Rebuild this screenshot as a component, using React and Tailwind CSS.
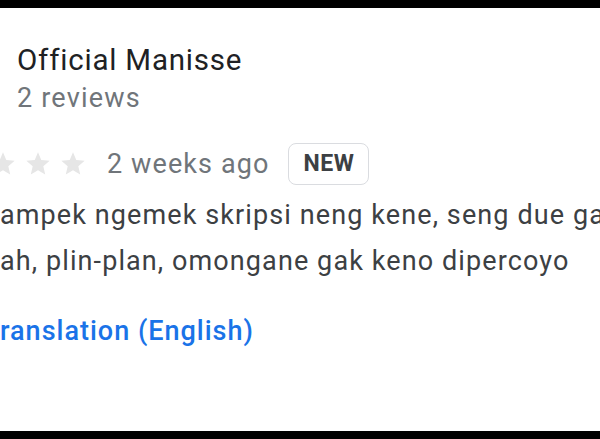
import React from "react";

const Star = ({ filled }) => (
  <svg width="28" height="28" viewBox="0 0 24 24" className="shrink-0">
    <path
      d="M12 17.27L18.18 21l-1.64-7.03L22 9.24l-7.19-.61L12 2 9.19 8.63 2 9.24l5.46 4.73L5.82 21z"
      fill={filled ? "#fbbc04" : "#e6e6e6"}
    />
  </svg>
);

export default function App() {
  return (
    <div className="w-[600px] h-[439px] overflow-hidden bg-black flex flex-col font-['Roboto',sans-serif]">
      <div className="h-[8px] shrink-0" />
      <div className="flex-1 bg-white overflow-hidden">
        {/* Reviewer */}
        <div className="pl-[17px] pt-[34px]">
          <div className="text-[29.5px] leading-[36px] tracking-[0.8px] text-[#202124]">Official Manisse</div>
          <div className="text-[27px] leading-[32px] tracking-[1.2px] text-[#70757a] mt-[4px]">2 reviews</div>
        </div>

        {/* Rating row */}
        <div className="flex items-center h-[42px] mt-[29px]">
          <div className="flex gap-[7px] -ml-[81px]">
            <Star filled />
            <Star />
            <Star />
            <Star />
            <Star />
          </div>
          <span className="text-[27px] tracking-[1.1px] text-[#70757a] ml-[20px]">2 weeks ago</span>
          <span className="ml-[19px] h-[42px] px-[14px] flex items-center border border-[#dadce0] rounded-[8px] text-[23px] tracking-[0.5px] font-bold text-[#3c4043]">
            NEW
          </span>
        </div>

        {/* Review text */}
        <div className="mt-[7px] text-[27px] leading-[46px] tracking-[1.1px] text-[#3c4043] whitespace-nowrap">
          <div>ampek ngemek skripsi neng kene, seng due ga</div>
          <div>ah, plin-plan, omongane gak keno dipercoyo</div>
        </div>

        <div className="mt-[24px] text-[27px] leading-[46px] tracking-[1px] font-medium text-[#1a73e8] whitespace-nowrap">
          ranslation (English)
        </div>
      </div>
      <div className="h-[8px] shrink-0" />
    </div>
  );
}
